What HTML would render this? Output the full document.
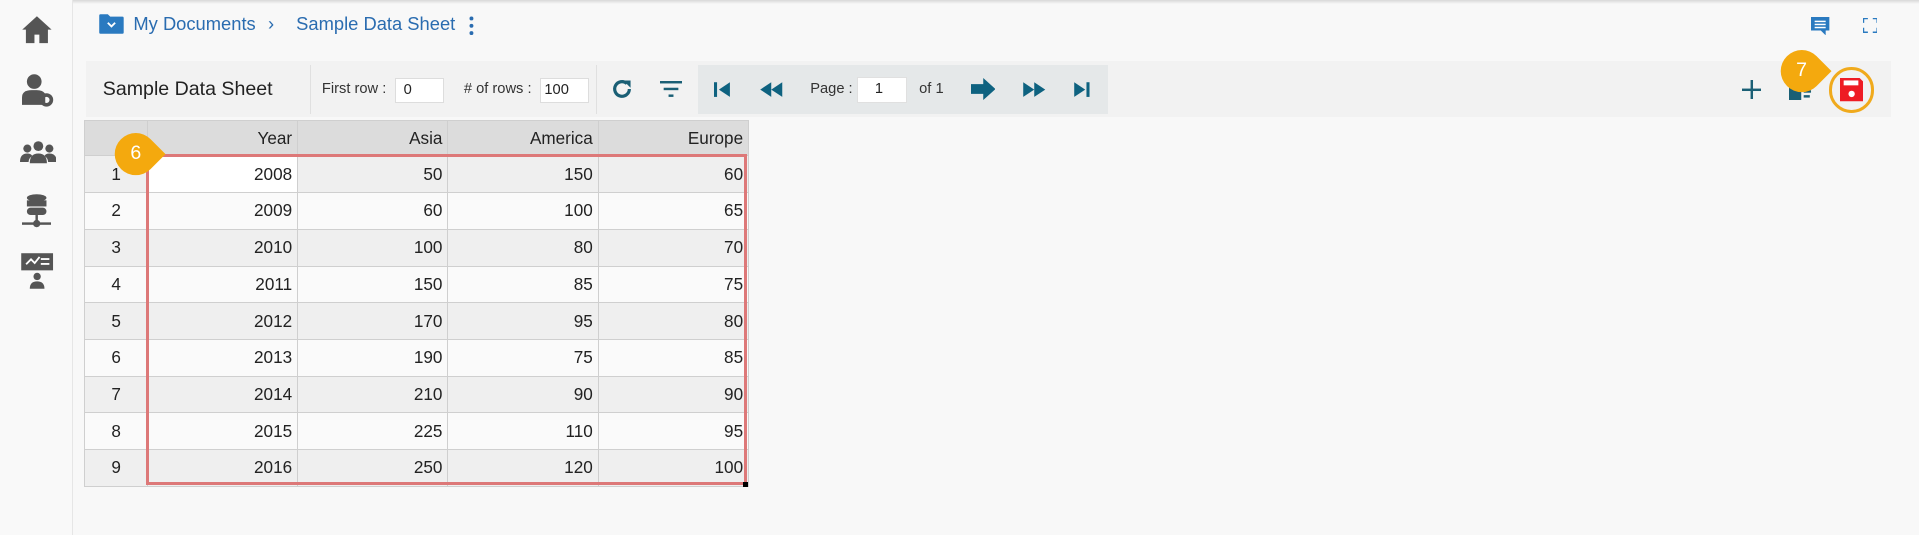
<!DOCTYPE html>
<html><head><meta charset="utf-8"><style>
*{box-sizing:border-box;margin:0;padding:0}
html,body{width:1919px;height:535px;overflow:hidden;background:#f8f8f8;font-family:"Liberation Sans",sans-serif}
#w{zoom:1.2239;width:1568px;height:437px;position:relative}
.a{position:absolute}
.sb{left:0;top:0;width:60px;height:437px;background:#f9f9f9;border-right:1px solid #e6e6e6}
.topsh{left:0;top:0;width:1568px;height:3px;background:linear-gradient(#d8d8d8,#f8f8f8)}
.tb{left:70px;top:50px;width:1475px;height:46px;background:#f2f2f2}
.pg{left:570px;top:53px;width:335px;height:40px;background:#e5e8e9}
.lbl{font-size:12px;color:#333}
.inp{background:#fff;border:1px solid #ddd;height:20px;font-size:12px;padding:2px 6px;color:#222}
table{border-collapse:collapse;font-size:14px;color:#222}
td{border:1px solid #cfcfcf;height:30px;text-align:right;padding-right:4px}
td.n{text-align:center;background:#d9d9d9;padding:0;width:51px}
tr.h td{background:#dcdcdc;height:29px}
tr.o td{background:#efefef}tr.e td{background:#fafafa}
.badge{width:34px;height:34px;background:#f4a90e;border-radius:50% 0 50% 50%;transform:rotate(45deg);}
.bt{color:#fff;font-size:16px;width:34px;text-align:center}
</style></head><body><div id="w">
<div class="a topsh"></div>
<div class="a sb"></div>
<!-- sidebar icons -->
<svg class="a" style="left:17px;top:12px" width="26" height="24" viewBox="0 0 26 24"><path d="M13 1 L1 12 h3 v11 h7 v-7 h4 v7 h7 V12 h3z" fill="#555"/></svg>
<svg class="a" style="left:18px;top:60px" width="26" height="28" viewBox="0 0 26 28"><circle cx="10" cy="7" r="6" fill="#555"/><path d="M0 26 v-6 q0-6 8-6 h4 q5 0 7 3 v9z" fill="#555"/><circle cx="20" cy="22" r="4" fill="none" stroke="#555" stroke-width="3"/></svg>
<svg class="a" style="left:16px;top:114px" width="30" height="20" viewBox="0 0 30 20"><circle cx="15" cy="5" r="4" fill="#555"/><circle cx="6" cy="7" r="3.3" fill="#555"/><circle cx="24" cy="7" r="3.3" fill="#555"/><path d="M8 19 q0-8 7-8 q7 0 7 8z M0 18 q0-7 6-7 q3 0 4 2 q-3 2-3 5z M30 18 q0-7-6-7 q-3 0-4 2 q3 2 3 5z" fill="#555"/></svg>
<svg class="a" style="left:18px;top:158px" width="24" height="30" viewBox="0 0 24 30"><ellipse cx="12" cy="4" rx="8" ry="3" fill="#555"/><rect x="4" y="6" width="16" height="5" fill="#555"/><rect x="4" y="12" width="16" height="6" rx="3" fill="#555"/><rect x="11" y="18" width="2" height="6" fill="#555"/><rect x="0" y="24" width="24" height="2" fill="#555"/><circle cx="12" cy="25" r="3" fill="#555"/></svg>
<svg class="a" style="left:16px;top:206px" width="28" height="30" viewBox="0 0 28 30"><rect x="1" y="1" width="26" height="14" fill="#555"/><path d="M5 10 l4-4 3 3 4-5" stroke="#fff" stroke-width="1.5" fill="none"/><rect x="17" y="5" width="7" height="1.5" fill="#fff"/><rect x="17" y="9" width="7" height="1.5" fill="#fff"/><circle cx="14" cy="20" r="3" fill="#555"/><path d="M8 30 q0-6 6-6 q6 0 6 6z" fill="#555"/></svg>
<!-- breadcrumb -->
<svg class="a" style="left:80px;top:11px" width="22" height="18" viewBox="0 0 22 18"><path d="M1 2 q0-1 1-1 h6 l2 2 h10 q1 0 1 1 v12 q0 1-1 1 H2 q-1 0-1-1z" fill="#2a7ac0"/><path d="M8 8 l3 3 3-3" stroke="#fff" stroke-width="1.5" fill="none"/></svg>
<div class="a" style="left:109px;top:11px;font-size:15px;color:#2a6cb0">My Documents</div>
<div class="a" style="left:219px;top:11px;font-size:15px;color:#2a6cb0">&#x203A;</div>
<div class="a" style="left:242px;top:11px;font-size:15px;color:#2a6cb0">Sample Data Sheet</div>
<svg class="a" style="left:383px;top:13px" width="4" height="16"><circle cx="2" cy="2" r="1.6" fill="#2a6cb0"/><circle cx="2" cy="8" r="1.6" fill="#2a6cb0"/><circle cx="2" cy="14" r="1.6" fill="#2a6cb0"/></svg>
<svg class="a" style="left:1480px;top:14px" width="15" height="15" viewBox="0 0 15 15"><path d="M0 0 h15 v11 h-3 v4 l-4-4 H0z" fill="#2a7ac0"/><rect x="3" y="3" width="9" height="1.2" fill="#fff"/><rect x="3" y="5.5" width="9" height="1.2" fill="#fff"/><rect x="3" y="8" width="9" height="1.2" fill="#fff"/></svg>
<svg class="a" style="left:1522px;top:15px" width="12" height="12" viewBox="0 0 12 12"><path d="M0 4 V0 h4 M8 0 h4 v4 M12 8 v4 h-4 M4 12 H0 V8" stroke="#2a7ac0" stroke-width="2" fill="none"/></svg>
<!-- toolbar -->
<div class="a tb"></div>
<div class="a" style="left:253px;top:53px;width:1px;height:40px;background:#e0e0e0"></div>
<div class="a" style="left:487px;top:53px;width:1px;height:40px;background:#e0e0e0"></div>
<div class="a" style="left:84px;top:64px;font-size:16px;color:#222">Sample Data Sheet</div>
<div class="a lbl" style="left:263px;top:66px">First row :</div>
<div class="a inp" style="left:323px;top:64px;width:40px">0</div>
<div class="a lbl" style="left:379px;top:66px"># of rows :</div>
<div class="a inp" style="left:441px;top:64px;width:40px;padding-left:3px">100</div>
<svg class="a" style="left:499px;top:64px" width="18" height="18" viewBox="0 0 18 18"><path d="M15 9 a6 6 0 1 1 -2-4.5" stroke="#1a5f75" stroke-width="2.6" fill="none"/><path d="M10 2 h6 v6z" fill="#1a5f75"/></svg>
<svg class="a" style="left:539px;top:66px" width="18" height="14"><rect x="0" y="0" width="18" height="2" fill="#1a5f75"/><rect x="3" y="5.5" width="12" height="2" fill="#1a5f75"/><rect x="7" y="11" width="4" height="2" fill="#1a5f75"/></svg>
<div class="a pg"></div>
<svg class="a" style="left:583px;top:66px" width="14" height="14"><rect x="0" y="1" width="2.5" height="12" fill="#0e6280"/><path d="M13 1 v12 L4 7z" fill="#0e6280"/></svg>
<svg class="a" style="left:620px;top:66px" width="20" height="14"><path d="M10 1 v12 L1 7z M19 1 v12 L10 7z" fill="#0e6280"/></svg>
<div class="a lbl" style="left:662px;top:66px">Page :</div>
<div class="a inp" style="left:700px;top:63px;width:41px;height:21px;padding-left:14px;border-color:#e0e0e0">1</div>
<div class="a lbl" style="left:751px;top:66px">of 1</div>
<svg class="a" style="left:793px;top:64px" width="20" height="18"><path d="M0 5 h10 V0 l10 9 -10 9 v-5 H0z" fill="#0e6280"/></svg>
<svg class="a" style="left:835px;top:66px" width="20" height="14"><path d="M1 1 v12 L10 7z M10 1 v12 L19 7z" fill="#0e6280"/></svg>
<svg class="a" style="left:877px;top:66px" width="14" height="14"><path d="M1 1 v12 L10 7z" fill="#0e6280"/><rect x="11" y="1" width="2.5" height="12" fill="#0e6280"/></svg>
<svg class="a" style="left:1423px;top:65px" width="16" height="16"><rect x="7" y="0" width="2" height="16" fill="#1a5f75"/><rect x="0" y="7" width="16" height="2" fill="#1a5f75"/></svg>
<svg class="a" style="left:1462px;top:64px" width="20" height="18"><rect x="0" y="3" width="10" height="15" fill="#1a5f75"/><rect x="12" y="6" width="8" height="2" fill="#1a5f75"/><rect x="12" y="10" width="6" height="2" fill="#1a5f75"/><rect x="12" y="14" width="5" height="2" fill="#1a5f75"/></svg>
<div class="a" style="left:1494px;top:55px;width:37px;height:37px;border:3px solid #f0aa1c;border-radius:50%"></div>
<svg class="a" style="left:1503px;top:64px" width="19" height="19" viewBox="0 0 19 19"><path d="M0 0 h16 l3 3 v16 H0z" fill="#ee1c24"/><rect x="3" y="2" width="12" height="4" fill="#fff"/><circle cx="9.5" cy="13" r="2.6" fill="#fff"/></svg>
<div class="a badge" style="left:1455px;top:41px"></div>
<div class="a bt" style="left:1455px;top:48px">7</div>
<!-- table -->
<table class="a" style="left:69px;top:98px;width:543px">
<colgroup><col style="width:51px"><col style="width:123px"><col style="width:123px"><col style="width:123px"><col style="width:123px"></colgroup>
<tr class="h"><td class="n"></td><td>Year</td><td>Asia</td><td>America</td><td>Europe</td></tr>
<tr class="o"><td class="n">1</td><td style="background:#fff">2008</td><td>50</td><td>150</td><td>60</td></tr>
<tr class="e"><td class="n">2</td><td>2009</td><td>60</td><td>100</td><td>65</td></tr>
<tr class="o"><td class="n">3</td><td>2010</td><td>100</td><td>80</td><td>70</td></tr>
<tr class="e"><td class="n">4</td><td>2011</td><td>150</td><td>85</td><td>75</td></tr>
<tr class="o"><td class="n">5</td><td>2012</td><td>170</td><td>95</td><td>80</td></tr>
<tr class="e"><td class="n">6</td><td>2013</td><td>190</td><td>75</td><td>85</td></tr>
<tr class="o"><td class="n">7</td><td>2014</td><td>210</td><td>90</td><td>90</td></tr>
<tr class="e"><td class="n">8</td><td>2015</td><td>225</td><td>110</td><td>95</td></tr>
<tr class="o"><td class="n">9</td><td>2016</td><td>250</td><td>120</td><td>100</td></tr>
</table>
<div class="a" style="left:119px;top:126px;width:491px;height:270px;border:3px solid #dd7878"></div>
<div class="a" style="left:607px;top:394px;width:4px;height:4px;background:#000"></div>
<div class="a badge" style="left:94px;top:109px"></div>
<div class="a bt" style="left:94px;top:116px">6</div>
</div></body></html>
